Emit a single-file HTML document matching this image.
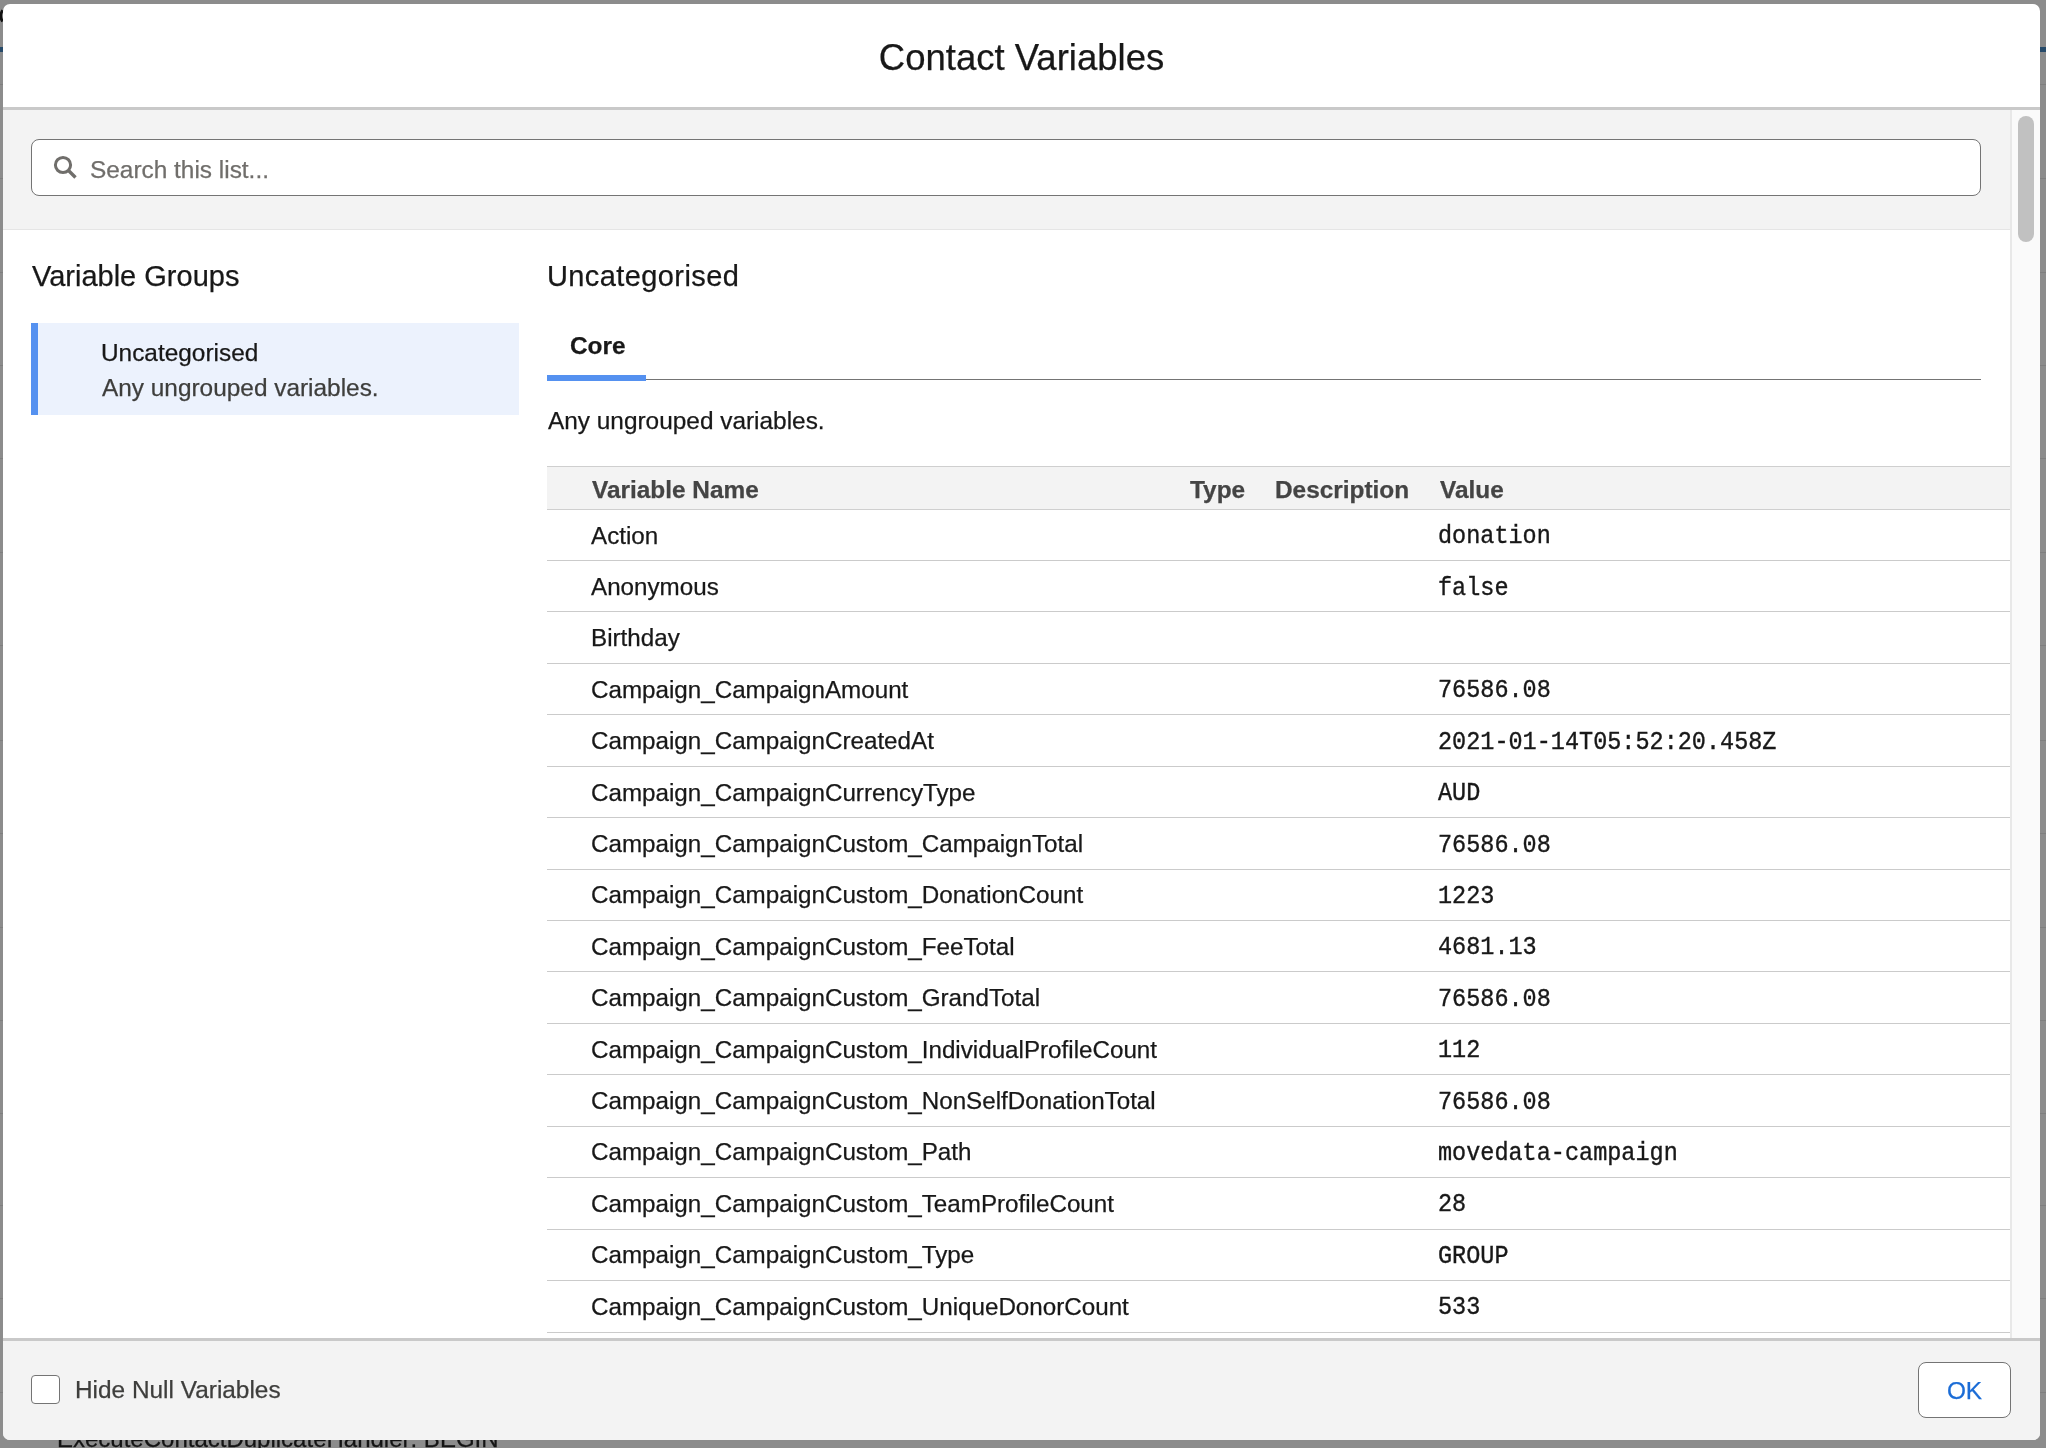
<!DOCTYPE html>
<html><head><meta charset="utf-8"><style>
html,body{margin:0;padding:0;}
body{width:2046px;height:1448px;overflow:hidden;background:#8c8c8c;position:relative;font-family:"Liberation Sans",sans-serif;color:#181818;}
.a{position:absolute;}
.t{position:absolute;white-space:pre;line-height:1;will-change:transform;-webkit-text-stroke:0.25px currentColor;}
.bgl{position:absolute;left:0;width:2046px;height:1px;background:#7f7f7f;}
.rl{position:absolute;left:547px;width:1463px;height:1px;background:#cbcbcb;}
</style></head><body>
<div class="bgl" style="top:84px"></div><div class="bgl" style="top:178px"></div><div class="bgl" style="top:272px"></div><div class="bgl" style="top:365px"></div><div class="bgl" style="top:458px"></div><div class="bgl" style="top:552px"></div><div class="bgl" style="top:645px"></div><div class="bgl" style="top:740px"></div><div class="bgl" style="top:833px"></div><div class="bgl" style="top:927px"></div><div class="bgl" style="top:1020px"></div><div class="bgl" style="top:1113px"></div><div class="bgl" style="top:1205px"></div><div class="bgl" style="top:1298px"></div><div class="bgl" style="top:1392px"></div>
<div class="a" style="left:0;top:47px;width:2046px;height:5px;background:#264a6a"></div>
<svg class="a" style="left:0;top:0" width="6" height="30" viewBox="0 0 6 30"><path d="M2.6 10.2 Q-1.2 16 2.6 21.6" fill="none" stroke="#111" stroke-width="2.6"/></svg>
<div class="t" style="left:57px;top:1426.6px;font-size:24px;color:#141414">ExecuteContactDuplicateHandler: BEGIN</div>
<div class="a" style="left:3px;top:4px;width:2037px;height:1436px;background:#fff;border-radius:7px;overflow:hidden">
  <div class="a" style="left:0;top:103px;width:2037px;height:3px;background:#c9c9c9"></div>
  <div class="a" style="left:0;top:106px;width:2007px;height:119px;background:#f3f3f3;border-bottom:1px solid #e5e5e5"></div>
  <div class="a" style="left:2007px;top:106px;width:30px;height:1228px;background:#fafafa;border-left:2px solid #e8e8e8;box-sizing:border-box"></div>
  <div class="a" style="left:0;top:1334px;width:2037px;height:3px;background:#c9c9c9"></div>
  <div class="a" style="left:0;top:1337px;width:2037px;height:99px;background:#f3f3f3"></div>
</div>
<!-- header title -->
<div class="t" style="left:0;width:2043px;text-align:center;top:39.69px;font-size:36.5px;color:#181818">Contact Variables</div>
<!-- search -->
<div class="a" style="left:31px;top:139px;width:1948px;height:55px;background:#fff;border:1px solid #747474;border-radius:8px"></div>
<svg class="a" style="left:48px;top:150px" width="34" height="34" viewBox="0 0 34 34"><circle cx='15' cy='15' r='7.6' fill='none' stroke='#706e6b' stroke-width='3'/><line x1='20.5' y1='20.5' x2='27.5' y2='27.5' stroke='#706e6b' stroke-width='3.4'/></svg>
<div class="t" style="left:90px;top:157.74px;font-size:24.4px;color:#706e6b;">Search this list...</div>
<!-- left column -->
<div class="t" style="left:32px;top:261.92px;font-size:29px;color:#181818;">Variable Groups</div>
<div class="a" style="left:31px;top:323px;width:488px;height:92px;background:#ecf2fd"></div>
<div class="a" style="left:31px;top:323px;width:7px;height:92px;background:#5591f0"></div>
<div class="t" style="left:101px;top:340.74px;font-size:24.4px;color:#181818;">Uncategorised</div>
<div class="t" style="left:102px;top:375.74px;font-size:24.4px;color:#3e3e3c;">Any ungrouped variables.</div>
<!-- right column -->
<div class="t" style="left:547px;top:261.92px;font-size:29px;color:#181818;letter-spacing:0.4px;">Uncategorised</div>
<div class="t" style="left:570px;top:333.74px;font-size:24.4px;color:#181818;font-weight:bold;">Core</div>
<div class="a" style="left:547px;top:379px;width:1434px;height:1px;background:#747474"></div>
<div class="a" style="left:547px;top:375px;width:99px;height:6px;background:#5591f0"></div>
<div class="t" style="left:548px;top:408.74px;font-size:24.4px;color:#181818;">Any ungrouped variables.</div>
<div class="a" style="left:547px;top:466px;width:1463px;height:42px;background:#f3f3f3;border-top:1px solid #cfcfcf;border-bottom:1px solid #cfcfcf"></div>
<div class="t" style="left:592px;top:477.74px;font-size:24.4px;color:#444444;font-weight:bold;">Variable Name</div>
<div class="t" style="left:1190px;top:477.74px;font-size:24.4px;color:#444444;font-weight:bold;">Type</div>
<div class="t" style="left:1275px;top:477.74px;font-size:24.4px;color:#444444;font-weight:bold;">Description</div>
<div class="t" style="left:1440px;top:477.74px;font-size:24.4px;color:#444444;font-weight:bold;">Value</div>
<div class="rl" style="top:559.94px"></div>
<div class="t" style="left:591px;top:523.50px;font-size:24.2px;color:#181818;">Action</div>
<div class="t" style="left:1437.8px;top:525.18px;font-size:23.5px;color:#181818;font-family:'Liberation Mono',monospace;transform:scaleY(1.1);transform-origin:0 18px;-webkit-text-stroke:0.35px #181818;">donation</div>
<div class="rl" style="top:611.38px"></div>
<div class="t" style="left:591px;top:574.90px;font-size:24.2px;color:#181818;">Anonymous</div>
<div class="t" style="left:1437.8px;top:576.58px;font-size:23.5px;color:#181818;font-family:'Liberation Mono',monospace;transform:scaleY(1.1);transform-origin:0 18px;-webkit-text-stroke:0.35px #181818;">false</div>
<div class="rl" style="top:662.82px"></div>
<div class="t" style="left:591px;top:626.30px;font-size:24.2px;color:#181818;">Birthday</div>
<div class="rl" style="top:714.26px"></div>
<div class="t" style="left:591px;top:677.70px;font-size:24.2px;color:#181818;">Campaign_CampaignAmount</div>
<div class="t" style="left:1437.8px;top:679.38px;font-size:23.5px;color:#181818;font-family:'Liberation Mono',monospace;transform:scaleY(1.1);transform-origin:0 18px;-webkit-text-stroke:0.35px #181818;">76586.08</div>
<div class="rl" style="top:765.70px"></div>
<div class="t" style="left:591px;top:729.10px;font-size:24.2px;color:#181818;">Campaign_CampaignCreatedAt</div>
<div class="t" style="left:1437.8px;top:730.78px;font-size:23.5px;color:#181818;font-family:'Liberation Mono',monospace;transform:scaleY(1.1);transform-origin:0 18px;-webkit-text-stroke:0.35px #181818;">2021-01-14T05:52:20.458Z</div>
<div class="rl" style="top:817.14px"></div>
<div class="t" style="left:591px;top:780.50px;font-size:24.2px;color:#181818;">Campaign_CampaignCurrencyType</div>
<div class="t" style="left:1437.8px;top:782.18px;font-size:23.5px;color:#181818;font-family:'Liberation Mono',monospace;transform:scaleY(1.1);transform-origin:0 18px;-webkit-text-stroke:0.35px #181818;">AUD</div>
<div class="rl" style="top:868.58px"></div>
<div class="t" style="left:591px;top:831.90px;font-size:24.2px;color:#181818;">Campaign_CampaignCustom_CampaignTotal</div>
<div class="t" style="left:1437.8px;top:833.58px;font-size:23.5px;color:#181818;font-family:'Liberation Mono',monospace;transform:scaleY(1.1);transform-origin:0 18px;-webkit-text-stroke:0.35px #181818;">76586.08</div>
<div class="rl" style="top:920.02px"></div>
<div class="t" style="left:591px;top:883.30px;font-size:24.2px;color:#181818;">Campaign_CampaignCustom_DonationCount</div>
<div class="t" style="left:1437.8px;top:884.98px;font-size:23.5px;color:#181818;font-family:'Liberation Mono',monospace;transform:scaleY(1.1);transform-origin:0 18px;-webkit-text-stroke:0.35px #181818;">1223</div>
<div class="rl" style="top:971.46px"></div>
<div class="t" style="left:591px;top:934.70px;font-size:24.2px;color:#181818;">Campaign_CampaignCustom_FeeTotal</div>
<div class="t" style="left:1437.8px;top:936.38px;font-size:23.5px;color:#181818;font-family:'Liberation Mono',monospace;transform:scaleY(1.1);transform-origin:0 18px;-webkit-text-stroke:0.35px #181818;">4681.13</div>
<div class="rl" style="top:1022.90px"></div>
<div class="t" style="left:591px;top:986.10px;font-size:24.2px;color:#181818;">Campaign_CampaignCustom_GrandTotal</div>
<div class="t" style="left:1437.8px;top:987.78px;font-size:23.5px;color:#181818;font-family:'Liberation Mono',monospace;transform:scaleY(1.1);transform-origin:0 18px;-webkit-text-stroke:0.35px #181818;">76586.08</div>
<div class="rl" style="top:1074.34px"></div>
<div class="t" style="left:591px;top:1037.50px;font-size:24.2px;color:#181818;">Campaign_CampaignCustom_IndividualProfileCount</div>
<div class="t" style="left:1437.8px;top:1039.18px;font-size:23.5px;color:#181818;font-family:'Liberation Mono',monospace;transform:scaleY(1.1);transform-origin:0 18px;-webkit-text-stroke:0.35px #181818;">112</div>
<div class="rl" style="top:1125.78px"></div>
<div class="t" style="left:591px;top:1088.90px;font-size:24.2px;color:#181818;">Campaign_CampaignCustom_NonSelfDonationTotal</div>
<div class="t" style="left:1437.8px;top:1090.58px;font-size:23.5px;color:#181818;font-family:'Liberation Mono',monospace;transform:scaleY(1.1);transform-origin:0 18px;-webkit-text-stroke:0.35px #181818;">76586.08</div>
<div class="rl" style="top:1177.22px"></div>
<div class="t" style="left:591px;top:1140.30px;font-size:24.2px;color:#181818;">Campaign_CampaignCustom_Path</div>
<div class="t" style="left:1437.8px;top:1141.98px;font-size:23.5px;color:#181818;font-family:'Liberation Mono',monospace;transform:scaleY(1.1);transform-origin:0 18px;-webkit-text-stroke:0.35px #181818;">movedata-campaign</div>
<div class="rl" style="top:1228.66px"></div>
<div class="t" style="left:591px;top:1191.70px;font-size:24.2px;color:#181818;">Campaign_CampaignCustom_TeamProfileCount</div>
<div class="t" style="left:1437.8px;top:1193.38px;font-size:23.5px;color:#181818;font-family:'Liberation Mono',monospace;transform:scaleY(1.1);transform-origin:0 18px;-webkit-text-stroke:0.35px #181818;">28</div>
<div class="rl" style="top:1280.10px"></div>
<div class="t" style="left:591px;top:1243.10px;font-size:24.2px;color:#181818;">Campaign_CampaignCustom_Type</div>
<div class="t" style="left:1437.8px;top:1244.78px;font-size:23.5px;color:#181818;font-family:'Liberation Mono',monospace;transform:scaleY(1.1);transform-origin:0 18px;-webkit-text-stroke:0.35px #181818;">GROUP</div>
<div class="rl" style="top:1331.54px"></div>
<div class="t" style="left:591px;top:1294.50px;font-size:24.2px;color:#181818;">Campaign_CampaignCustom_UniqueDonorCount</div>
<div class="t" style="left:1437.8px;top:1296.18px;font-size:23.5px;color:#181818;font-family:'Liberation Mono',monospace;transform:scaleY(1.1);transform-origin:0 18px;-webkit-text-stroke:0.35px #181818;">533</div>
<!-- scrollbar thumb -->
<div class="a" style="left:2018px;top:116px;width:16px;height:126px;background:#c1c1c1;border-radius:8px"></div>
<!-- footer -->
<div class="a" style="left:31px;top:1375px;width:27px;height:27px;background:#fff;border:1px solid #747474;border-radius:4px"></div>
<div class="t" style="left:74.5px;top:1377.74px;font-size:24.4px;color:#3e3e3c;">Hide Null Variables</div>
<div class="a" style="left:1918px;top:1362px;width:91px;height:54px;background:#fff;border:1px solid #747474;border-radius:8px"></div>
<div class="t" style="left:1918px;width:93px;text-align:center;top:1378.74px;font-size:24.4px;color:#1b6cd6">OK</div>
</body></html>
